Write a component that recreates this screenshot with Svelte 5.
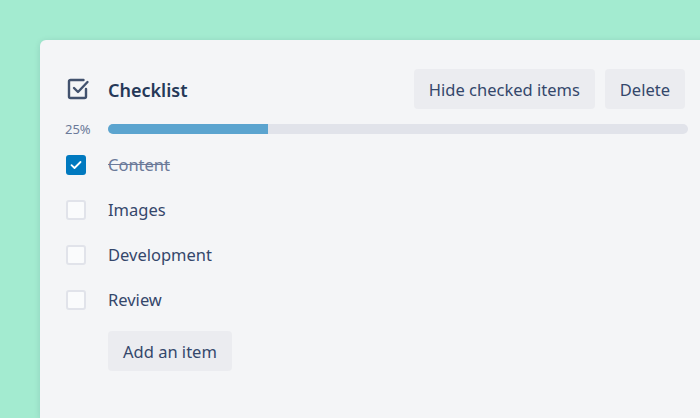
<script>
    let items = [
        { name: "Content", done: true },
        { name: "Images", done: false },
        { name: "Development", done: false },
        { name: "Review", done: false }
    ];
</script>

<main class="page">
    <div class="card">
        <div class="header">
            <div class="icon_col">
                <svg width="24" height="24" viewBox="0 0 24 24" fill="none" stroke="#42526e" stroke-width="2.4" stroke-linecap="round" stroke-linejoin="round">
                    <path d="M20 12v7.500a1.500 1.500 0 0 1-1.500 1.500H4.500A1.500 1.500 0 0 1 3 19.500V4.500A1.500 1.500 0 0 1 4.500 3H17.500"/>
                    <path d="M8 11l4 4 9.500-10"/>
                </svg>
            </div>
            <h2>Checklist</h2>
            <button class="btn">Hide checked items</button>
            <button class="btn">Delete</button>
        </div>

        <div class="progress">
            <span class="percent">25%</span>
            <div class="track"><div class="fill"></div></div>
        </div>

        <ul>
            {#each items as item}
                <li>
                    <span class="box" class:checked={item.done}>
                        {#if item.done}
                            <svg width="12" height="10" viewBox="0 0 12 10" fill="none" stroke="#fff" stroke-width="1.800" stroke-linecap="round" stroke-linejoin="round">
                                <path d="M1.500 5.200l3 2.800 6-6"/>
                            </svg>
                        {/if}
                    </span>
                    <span class="name" class:done={item.done}>{item.name}</span>
                </li>
            {/each}
        </ul>

        <button class="btn add">Add an item</button>
    </div>
</main>

<style>

:global(body){
    margin: 0;
    background-color: #a3ebd0;
    overflow: hidden;
}

.page{
    height: 418px;
    padding: 40px 0 0 40px;
    box-sizing: border-box;
    overflow: hidden;
    font-family: "Noto Sans", "Open Sans", sans-serif;
    font-size: 16.5px;
    color: #34476b;
}

.card{
    width: 680px;
    height: 378px;
    box-sizing: border-box;
    padding: 29px 0 0 26px;
    background-color: #f4f5f7;
    border-radius: 6px 0 0 0;
    box-shadow: 0 1px 6px rgba(9, 30, 66, 0.12);
}

.header{
    display: flex;
    align-items: center;
    width: 619px;
    gap: 10px;
}

.icon_col{
    width: 32px;
    display: flex;
}

h2{
    margin: 0 auto 0 0;
    padding-top: 2px;
    font-size: 18px;
    font-weight: 600;
    color: #253858;
}

.btn{
    height: 40px;
    padding: 0 15px;
    border: none;
    border-radius: 4px;
    background-color: #ebecf0;
    color: #34476b;
    font: inherit;
    cursor: pointer;
}

.progress{
    display: flex;
    align-items: center;
    margin-top: 11px;
    margin-left: -1px;
}

.percent{
    width: 43px;
    font-size: 13px;
    color: #6b7a99;
}

.track{
    width: 580px;
    height: 10px;
    border-radius: 5px;
    background-color: #e1e3ea;
    overflow: hidden;
}

.fill{
    width: 160px;
    height: 100%;
    background-color: #5ba4cf;
}

ul{
    list-style: none;
    margin: 4px 0 0 0;
    padding: 0;
}

li{
    display: flex;
    align-items: center;
    height: 45px;
}

.box{
    width: 20px;
    height: 20px;
    box-sizing: border-box;
    margin-right: 22px;
    display: flex;
    align-items: center;
    justify-content: center;
    border: 2px solid #e1e3ea;
    border-radius: 3px;
    background-color: #fafbfc;
}

.checked{
    border: none;
    background-color: #0079bf;
}

.done{
    color: #6b7a99;
    text-decoration: line-through;
}

.add{
    margin: 9px 0 0 42px;
}

</style>
